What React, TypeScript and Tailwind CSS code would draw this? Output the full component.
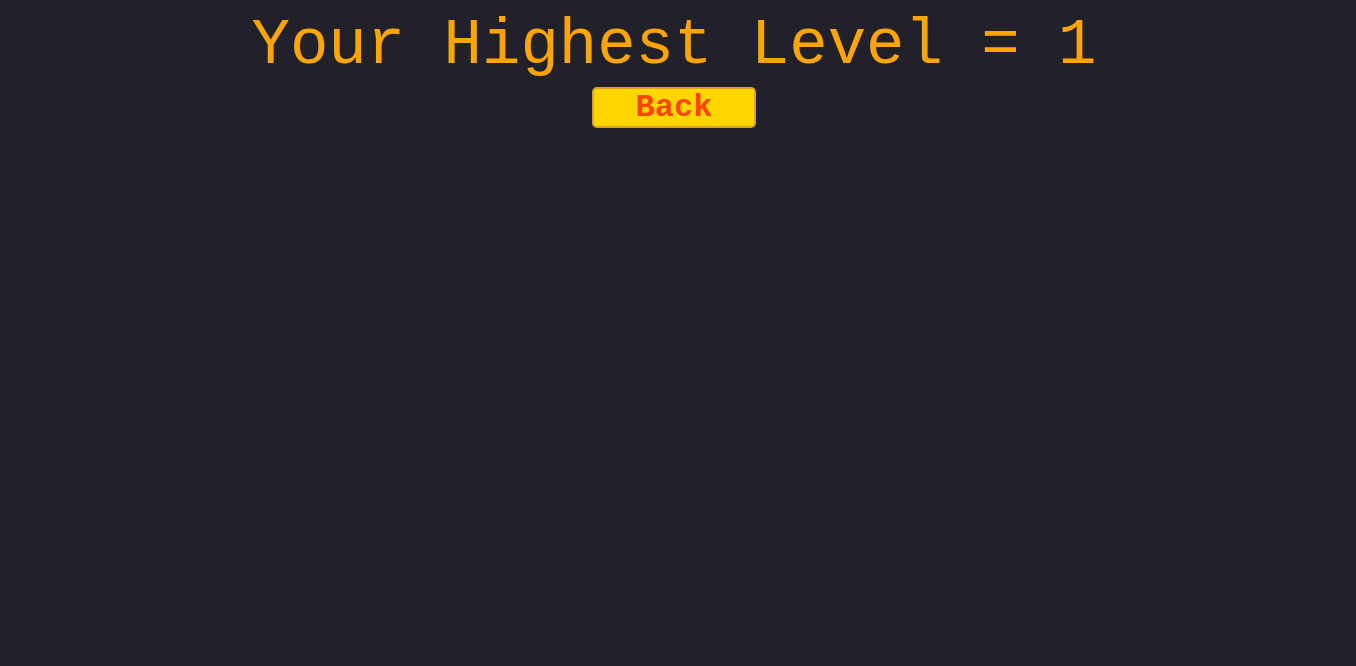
export default function App() {
  return (
    <div className="min-h-[666px] w-full bg-[#202129] pr-[8px] pt-[10px] flex flex-col items-center" style={{ fontFamily: '"Liberation Mono", "Courier New", monospace' }}>
      <h1 className="text-[64px] leading-[72.5px] font-normal text-[#ffa500] whitespace-pre">Your Highest Level = 1</h1>
      <button className="mt-[4.5px] w-[164px] h-[41px] flex items-center justify-center bg-[#ffd700] border-2 border-[#daa520] rounded-[5px] text-[32px] font-bold text-[#ff4500] leading-none">
        Back
      </button>
    </div>
  );
}
